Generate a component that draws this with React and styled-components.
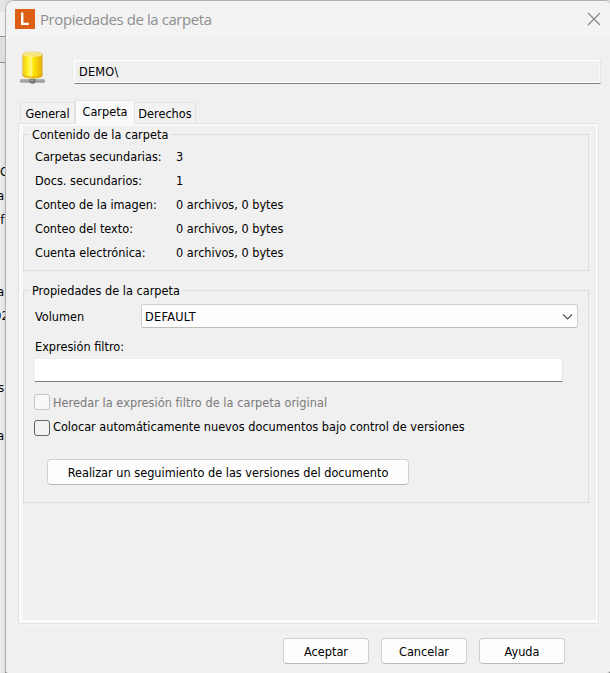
import React from "react";
import styled, { createGlobalStyle } from "styled-components";

const GlobalStyle = createGlobalStyle`
  * { box-sizing: border-box; }
  body {
    margin: 0;
    overflow: hidden;
    background: #e9e9e9;
    color: #000;
    font: 12.6px/16px "DejaVu Sans Condensed", "DejaVu Sans", sans-serif;
    font-stretch: condensed;
  }
  button, input { font: inherit; font-stretch: condensed; color: inherit; }
`;

const Screen = styled.div`
  display: flex;
  width: 610px;
  height: 673px;
  overflow: hidden;
  background: linear-gradient(180deg, #dedede 0, #d4d4d4 660px, #8c8c8c 670px);
`;

const Backdrop = styled.div`
  flex: 0 0 5px;
  min-width: 0;
  height: 673px;
  background: linear-gradient(90deg, #eeeeee, #dedede);
`;

const BackdropBand = styled.div`
  height: ${(p) => p.$height}px;
  background: ${(p) => p.$color};
  border-bottom: ${(p) => (p.$line ? "1px solid #8f8f8f" : "0")};
`;

const BackdropLine = styled.div`
  width: 5px;
  height: 24px;
  line-height: 24px;
  overflow: hidden;
  white-space: nowrap;
  font-size: 13px;
`;

const BackdropText = styled.span`
  display: block;
  margin-left: ${(p) => p.$start}px;
`;

const Dialog = styled.main`
  display: flex;
  flex-direction: column;
  flex: none;
  width: 605px;
  height: 673px;
  background: #f0f0f0;
  border: 1px solid #b0b0b0;
  border-right: 0;
  border-bottom: 0;
  border-radius: 9px 5px 3px 3px;
  overflow: hidden;
`;

const TitleBar = styled.header`
  display: flex;
  align-items: center;
  flex: none;
  height: 37px;
  padding: 0 9px 1px;
  background: #f3f3f3;
`;

const Title = styled.h1`
  flex: 1;
  margin: 0 0 0 5px;
  font: 400 15px/20px "Open Sans", "Noto Sans", sans-serif;
  font-stretch: normal;
  letter-spacing: -0.42px;
  color: #8f8f8f;
`;

const CloseButton = styled.button`
  display: grid;
  place-items: center;
  width: 14px;
  height: 14px;
  padding: 0;
  border: 0;
  background: none;
`;

const PathRow = styled.div`
  display: flex;
  flex: none;
  height: 62px;
  padding: 13px 0 0 13px;
`;

const PathField = styled.div`
  width: 527px;
  height: 24px;
  margin: 9px 0 0 28px;
  padding: 3px 4px;
  border: 1px solid #fff;
  border-right-color: #e4e4e4;
  border-bottom-color: #808080;
  box-shadow: inset 0 -1px #fff, inset -1px 0 #fafafa;
`;

const Label = styled.span`
  letter-spacing: ${(p) => p.$spacing || 0}px;
  white-space: nowrap;
`;

const TabList = styled.nav`
  display: flex;
  align-items: flex-end;
  flex: none;
  position: relative;
  z-index: 1;
  height: 23px;
  padding-left: 14px;
`;

const Tab = styled.button`
  display: flex;
  justify-content: center;
  width: ${(p) => p.$width}px;
  height: ${(p) => (p.$active ? 24 : 21)}px;
  margin-bottom: ${(p) => (p.$active ? -1 : 0)}px;
  padding: 3px 0 0;
  border: 1px solid #e3e3e3;
  border-bottom: 0;
  border-left-width: ${(p) => (p.$joined ? 0 : 1)}px;
  background: ${(p) => (p.$active ? "#fafafa" : "#f2f2f2")};
`;

const Panel = styled.section`
  flex: none;
  width: 581px;
  height: 501px;
  margin-left: 12px;
  padding-top: 8px;
  padding-left: 4px;
  border: 1px solid #e3e3e3;
  box-shadow: inset 4px 0 #fafafa, inset -2px 0 #fafafa, inset 0 2px #fafafa,
    inset 0 -3px #fafafa, 1px 1px #f5f5f5;
`;

const Group = styled.section`
  width: 566px;
  height: ${(p) => p.$height}px;
  margin-top: ${(p) => p.$top}px;
  border: 1px solid #dcdcdc;
`;

const GroupTitle = styled.h2`
  width: fit-content;
  height: 14px;
  margin: -8px 0 0 6px;
  padding: 0 2px;
  font: inherit;
  font-stretch: condensed;
  background: #f0f0f0;
`;

const Facts = styled.dl`
  display: grid;
  grid-template-columns: 141px 1fr;
  grid-auto-rows: 24px;
  margin: 4px 0 0 11px;
  line-height: 24px;
  dt, dd { margin: 0; white-space: nowrap; }
`;

const FieldRow = styled.div`
  display: flex;
  align-items: center;
  height: 24px;
  margin: 7px 0 0 11px;
`;

const FieldName = styled.span`
  flex: 0 0 106px;
  padding-top: 2px;
`;

const Combo = styled.button`
  display: flex;
  align-items: center;
  justify-content: space-between;
  width: 437px;
  height: 24px;
  padding: 2px 4px 0 3px;
  border: 1px solid #cfcfcf;
  border-bottom-color: #bdbdbd;
  border-radius: 2px;
  background: #fdfdfd;
`;

const FilterName = styled.label`
  display: block;
  margin: 11px 0 0 11px;
`;

const FilterInput = styled.input`
  display: block;
  width: 528px;
  height: 24px;
  margin: 3px 0 0 11px;
  border: 1px solid #efefef;
  border-left: 0;
  border-right-color: #e4e4e4;
  border-bottom-color: #808080;
  background: #fff;
`;

const CheckRow = styled.label`
  display: flex;
  height: 16px;
  margin: ${(p) => p.$top}px 0 0 10px;
  color: ${(p) => (p.$disabled ? "#7a7a7a" : "#000")};
`;

const CheckBox = styled.span`
  flex: none;
  width: 16px;
  height: 16px;
  margin-right: 3px;
  border: 1px solid ${(p) => (p.$disabled ? "#c5c5c5" : "#626262")};
  border-radius: 3px;
  background: ${(p) => (p.$disabled ? "#f8f8f8" : "#f3f3f3")};
`;

const CheckText = styled.span`
  margin-top: ${(p) => p.$shift || 0}px;
  letter-spacing: ${(p) => p.$spacing || 0}px;
  white-space: nowrap;
`;

const PushButton = styled.button`
  display: flex;
  align-items: center;
  justify-content: center;
  width: ${(p) => p.$width}px;
  height: 26px;
  padding: 1px 0 0;
  border: 1px solid #d0d0d0;
  border-bottom-color: #bababa;
  border-radius: 4px;
  background: #fdfdfd;
`;

const VersionAction = styled.div`
  margin: 23px 0 0 23px;
`;

const Footer = styled.footer`
  display: flex;
  gap: 12px;
  margin: 14px 0 0 277px;
`;

const AppLogo = () => (
  <svg width="20" height="20" viewBox="0 0 20 20">
    <rect width="20" height="20" fill="#dc5f14" />
    <path d="M7.2 3.5V14.9H13.8" fill="none" stroke="#fff" strokeWidth="2.4" />
  </svg>
);

const CloseIcon = () => (
  <svg width="14" height="14" viewBox="0 0 14 14">
    <path d="M1 1 13 13M13 1 1 13" stroke="#858585" strokeWidth="1.1" />
  </svg>
);

const VolumeIcon = () => (
  <svg width="27" height="34" viewBox="0 0 27 34">
    <defs>
      <linearGradient id="body">
        <stop offset="0" stopColor="#eec522" />
        <stop offset=".25" stopColor="#fff21e" />
        <stop offset=".43" stopColor="#fff98c" />
        <stop offset=".55" stopColor="#ffe600" />
        <stop offset="1" stopColor="#e3aa10" />
      </linearGradient>
      <linearGradient id="base" x2="0" y2="1">
        <stop offset="0" stopColor="#777" />
        <stop offset=".45" stopColor="#b8b8b8" />
        <stop offset="1" stopColor="#777" />
      </linearGradient>
    </defs>
    <rect x="1" y="28.5" width="25" height="3" rx="1" fill="url(#base)" />
    <rect x="11.5" y="25" width="4" height="5" fill="#888" />
    <ellipse cx="13.5" cy="30" rx="3.2" ry="2.8" fill="#747474" />
    <ellipse cx="13" cy="29.3" rx="1.5" ry=".8" fill="#bbb" />
    <path d="M3.5 3.5C3.5 .2 23.5 .2 23.5 3.5V24.2C23.5 28.6 3.5 28.6 3.5 24.2Z" fill="url(#body)" stroke="#dcc67c" strokeWidth=".7" />
    <ellipse cx="13.5" cy="3.5" rx="9.3" ry="1.9" fill="#f7e47c" stroke="#fbf0b0" strokeWidth=".6" />
    <path d="M4.2 23.5C6 27 21 27 22.8 23.5" fill="none" stroke="#e79c00" strokeWidth="1.5" opacity=".65" />
  </svg>
);

const ChevronIcon = () => (
  <svg width="11" height="7" viewBox="0 0 11 7">
    <path d="M1 .5 5.5 5 10 .5" fill="none" stroke="#505050" strokeWidth="1.1" />
  </svg>
);

const backdropLines = [
  ["C", 0], ["a,", -3], ["ef", -7], null, null, ["a,", -3],
  ["02", -6], null, null, ["s", -2], null, ["a,", -3],
];

const facts = [
  ["Carpetas secundarias:", "3"],
  ["Docs. secundarios:", "1"],
  ["Conteo de la imagen:", "0 archivos, 0 bytes"],
  ["Conteo del texto:", "0 archivos, 0 bytes"],
  ["Cuenta electrónica:", "0 archivos, 0 bytes"],
];

export default function App() {
  return (
    <>
      <GlobalStyle />
      <Screen>
        <Backdrop>
          <BackdropBand $height={12} $color="#e4e4e4" />
          <BackdropBand $height={25} $color="#f0f0f0" $line />
          <BackdropBand $height={26} $color="#dedede" $line />
          <BackdropBand $height={97} $color="transparent" />
          {backdropLines.map((line, i) => (
            <BackdropLine key={i}>
              {line && <BackdropText $start={line[1]}>{line[0]}</BackdropText>}
            </BackdropLine>
          ))}
        </Backdrop>
        <Dialog>
          <TitleBar>
            <AppLogo />
            <Title>Propiedades de la carpeta</Title>
            <CloseButton aria-label="Cerrar"><CloseIcon /></CloseButton>
          </TitleBar>
          <PathRow>
            <VolumeIcon />
            <PathField><Label $spacing={0.2}>DEMO\</Label></PathField>
          </PathRow>
          <TabList>
            <Tab $width={55}><Label $spacing={-0.1}>General</Label></Tab>
            <Tab $width={60} $active><Label>Carpeta</Label></Tab>
            <Tab $width={61} $joined><Label>Derechos</Label></Tab>
          </TabList>
          <Panel>
            <Group $height={137} $top={2}>
              <GroupTitle>Contenido de la carpeta</GroupTitle>
              <Facts>
                {facts.map(([name, value]) => (
                  <React.Fragment key={name}>
                    <dt><Label>{name}</Label></dt>
                    <dd><Label>{value}</Label></dd>
                  </React.Fragment>
                ))}
              </Facts>
            </Group>
            <Group $height={213} $top={19}>
              <GroupTitle>Propiedades de la carpeta</GroupTitle>
              <FieldRow>
                <FieldName><Label>Volumen</Label></FieldName>
                <Combo><Label $spacing={0.3}>DEFAULT</Label><ChevronIcon /></Combo>
              </FieldRow>
              <FilterName htmlFor="filter"><Label>Expresión filtro:</Label></FilterName>
              <FilterInput id="filter" />
              <CheckRow $top={12} $disabled>
                <CheckBox $disabled />
                <CheckText $shift={1} $spacing={0.04}>Heredar la expresión filtro de la carpeta original</CheckText>
              </CheckRow>
              <CheckRow $top={10}>
                <CheckBox />
                <CheckText $shift={-1}>Colocar automáticamente nuevos documentos bajo control de versiones</CheckText>
              </CheckRow>
              <VersionAction>
                <PushButton $width={362}><Label>Realizar un seguimiento de las versiones del documento</Label></PushButton>
              </VersionAction>
            </Group>
          </Panel>
          <Footer>
            <PushButton $width={86}><Label>Aceptar</Label></PushButton>
            <PushButton $width={86}><Label>Cancelar</Label></PushButton>
            <PushButton $width={86}><Label>Ayuda</Label></PushButton>
          </Footer>
        </Dialog>
      </Screen>
    </>
  );
}
